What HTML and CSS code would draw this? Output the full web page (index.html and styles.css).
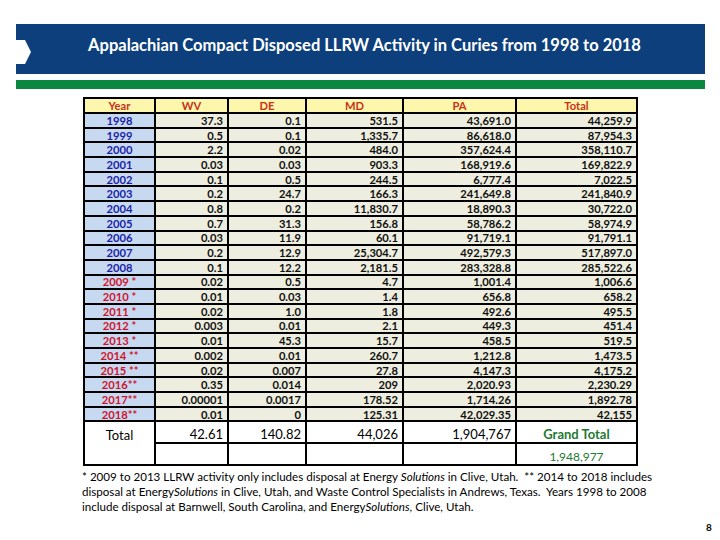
FILE: index.html
```html
<!DOCTYPE html>
<html>
<head>
<meta charset="utf-8">
<link rel="stylesheet" href="styles.css">
</head>
<body>
<div class="slide">
  <div class="banner">
    <svg class="notch" width="16" height="24" viewBox="0 0 16 24"><polygon points="0,0 9,0 15,12 9,24 0,24" fill="#ffffff"/></svg>
    <h1 class="title">Appalachian Compact Disposed LLRW Activity in Curies from 1998 to 2018</h1>
  </div>
  <div class="greenbar"></div>
  <table class="data">
    <colgroup>
      <col class="c-year"><col class="c-wv"><col class="c-de"><col class="c-md"><col class="c-pa"><col class="c-total">
    </colgroup>
    <thead>
      <tr class="head"><th>Year</th><th>WV</th><th>DE</th><th>MD</th><th>PA</th><th>Total</th></tr>
    </thead>
    <tbody>
      <tr><td class="yr">1998</td><td>37.3</td><td>0.1</td><td>531.5</td><td>43,691.0</td><td>44,259.9</td></tr>
      <tr><td class="yr">1999</td><td>0.5</td><td>0.1</td><td>1,335.7</td><td>86,618.0</td><td>87,954.3</td></tr>
      <tr><td class="yr">2000</td><td>2.2</td><td>0.02</td><td>484.0</td><td>357,624.4</td><td>358,110.7</td></tr>
      <tr><td class="yr">2001</td><td>0.03</td><td>0.03</td><td>903.3</td><td>168,919.6</td><td>169,822.9</td></tr>
      <tr><td class="yr">2002</td><td>0.1</td><td>0.5</td><td>244.5</td><td>6,777.4</td><td>7,022.5</td></tr>
      <tr><td class="yr">2003</td><td>0.2</td><td>24.7</td><td>166.3</td><td>241,649.8</td><td>241,840.9</td></tr>
      <tr><td class="yr">2004</td><td>0.8</td><td>0.2</td><td>11,830.7</td><td>18,890.3</td><td>30,722.0</td></tr>
      <tr><td class="yr">2005</td><td>0.7</td><td>31.3</td><td>156.8</td><td>58,786.2</td><td>58,974.9</td></tr>
      <tr><td class="yr">2006</td><td>0.03</td><td>11.9</td><td>60.1</td><td>91,719.1</td><td>91,791.1</td></tr>
      <tr><td class="yr">2007</td><td>0.2</td><td>12.9</td><td>25,304.7</td><td>492,579.3</td><td>517,897.0</td></tr>
      <tr><td class="yr">2008</td><td>0.1</td><td>12.2</td><td>2,181.5</td><td>283,328.8</td><td>285,522.6</td></tr>
      <tr><td class="yr red">2009 *</td><td>0.02</td><td>0.5</td><td>4.7</td><td>1,001.4</td><td>1,006.6</td></tr>
      <tr><td class="yr red">2010 *</td><td>0.01</td><td>0.03</td><td>1.4</td><td>656.8</td><td>658.2</td></tr>
      <tr><td class="yr red">2011 *</td><td>0.02</td><td>1.0</td><td>1.8</td><td>492.6</td><td>495.5</td></tr>
      <tr><td class="yr red">2012 *</td><td>0.003</td><td>0.01</td><td>2.1</td><td>449.3</td><td>451.4</td></tr>
      <tr><td class="yr red">2013 *</td><td>0.01</td><td>45.3</td><td>15.7</td><td>458.5</td><td>519.5</td></tr>
      <tr><td class="yr red">2014 **</td><td>0.002</td><td>0.01</td><td>260.7</td><td>1,212.8</td><td>1,473.5</td></tr>
      <tr><td class="yr red">2015 **</td><td>0.02</td><td>0.007</td><td>27.8</td><td>4,147.3</td><td>4,175.2</td></tr>
      <tr><td class="yr red">2016**</td><td>0.35</td><td>0.014</td><td>209</td><td>2,020.93</td><td>2,230.29</td></tr>
      <tr><td class="yr red">2017**</td><td>0.00001</td><td>0.0017</td><td>178.52</td><td>1,714.26</td><td>1,892.78</td></tr>
      <tr><td class="yr red">2018**</td><td>0.01</td><td>0</td><td>125.31</td><td>42,029.35</td><td>42,155</td></tr>
      <tr class="sum"><td class="lbl" rowspan="2">Total</td><td>42.61</td><td>140.82</td><td>44,026</td><td>1,904,767</td><td class="grand">Grand Total</td></tr>
      <tr class="sum2"><td></td><td></td><td></td><td></td><td class="grandval">1,948,977</td></tr>
    </tbody>
  </table>
  <p class="note">* 2009 to 2013 LLRW activity only includes disposal at Energy <i>Solutions</i> in Clive, Utah.&nbsp; ** 2014 to 2018 includes<br>disposal at Energy<i>Solutions</i> in Clive, Utah, and Waste Control Specialists in Andrews, Texas.&nbsp; Years 1998 to 2008<br>include disposal at Barnwell, South Carolina, and Energy<i>Solutions</i>, Clive, Utah.</p>
  <div class="pagenum">8</div>
</div>
</body>
</html>
```
FILE: styles.css
```css
html, body {
  margin: 0;
  padding: 0;
  background: #ffffff;
}
.slide {
  width: 720px;
  height: 540px;
  position: relative;
  overflow: hidden;
  font-family: Lato, "Liberation Sans", sans-serif;
}
.banner {
  margin: 24px 15px 0 16px;
  height: 50px;
  background: #0d3f7c;
  display: flex;
  align-items: center;
  justify-content: center;
  position: relative;
}
.notch {
  position: absolute;
  left: 0;
  top: 16px;
}
.title {
  margin: 0 0 8px 8px;
  color: #ffffff;
  font-size: 16.5px;
  font-weight: 700;
  letter-spacing: 0;
  white-space: nowrap;
}
.greenbar {
  margin: 6px 15px 0 16px;
  height: 9px;
  background: #0c8740;
}
.data {
  margin: 8px 0 0 83px;
  border-collapse: collapse;
  table-layout: fixed;
  width: 553px;
}
.c-year { width: 71px; }
.c-wv { width: 73px; }
.c-de { width: 78px; }
.c-md { width: 97px; }
.c-pa { width: 113px; }
.c-total { width: 121px; }
.data th, .data td {
  border: 2px solid #000000;
  padding: 0 4px 0 0;
  height: 12.7px;
  font-size: 11.2px;
  line-height: 11px;
  font-weight: 700;
  color: #111111;
  background: #edeedf;
  text-align: right;
  white-space: nowrap;
  overflow: hidden;
}
.data .head th {
  background: #fdf6ad;
  color: #c8321a;
  text-align: center;
  padding: 0;
  height: 13px;
}
.data td.yr {
  background: #c6d9f0;
  color: #1a22a8;
  text-align: center;
  padding: 0;
}
.data td.yr.red {
  color: #d0142c;
}
.data .sum td {
  background: #ffffff;
  height: 17px;
  font-size: 13px;
  font-weight: 400;
  color: #000000;
  line-height: 14px;
  padding-top: 3px;
  vertical-align: middle;
}
.data .sum td.lbl {
  text-align: center;
  vertical-align: top;
  padding: 6px 0 0 0;
}
.data .sum td.grand {
  color: #1e7a32;
  font-weight: 700;
  text-align: center;
  padding: 3px 0 0 0;
}
.data .sum2 td {
  background: #ffffff;
  height: 16px;
}
.data .sum2 td.grandval {
  color: #1e7a32;
  font-size: 12px;
  font-weight: 400;
  text-align: center;
  padding: 4px 0 0 0;
  line-height: 13px;
}
.note {
  margin: 3px 0 0 82px;
  font-size: 11.6px;
  line-height: 15px;
  color: #000000;
  font-weight: 400;
  white-space: nowrap;
}
.pagenum {
  position: absolute;
  left: 706px;
  top: 521px;
  font-size: 10px;
  font-weight: 700;
  color: #000;
}
```
